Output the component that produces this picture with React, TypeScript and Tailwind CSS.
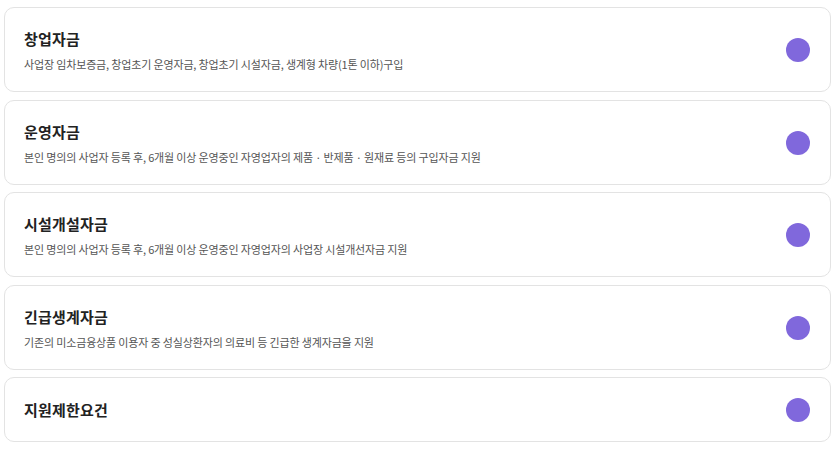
const items = [
  {
    title: '창업자금',
    desc: '사업장 임차보증금, 창업초기 운영자금, 창업초기 시설자금, 생계형 차량(1톤 이하)구입',
  },
  {
    title: '운영자금',
    desc: '본인 명의의 사업자 등록 후, 6개월 이상 운영중인 자영업자의 제품 · 반제품 · 원재료 등의 구입자금 지원',
  },
  {
    title: '시설개설자금',
    desc: '본인 명의의 사업자 등록 후, 6개월 이상 운영중인 자영업자의 사업장 시설개선자금 지원',
  },
  {
    title: '긴급생계자금',
    desc: '기존의 미소금융상품 이용자 중 성실상환자의 의료비 등 긴급한 생계자금을 지원',
  },
  { title: '지원제한요건', desc: '' },
]

export default function App() {
  return (
    <div
      className="flex min-h-[449px] flex-col gap-[7.5px] bg-white pb-2 pl-[4px] pr-[7px] pt-[7px]"
      style={{ fontFamily: '"Noto Sans CJK KR", "Noto Sans", sans-serif' }}
    >
      {items.map((item) => (
        <div
          key={item.title}
          className="flex items-center justify-between rounded-[10px] border border-[#e3e3e3] bg-white pb-[19px] pl-[19px] pr-[20px] pt-[20px]"
        >
          <div className="min-w-0">
            <div className="text-[15px] font-bold leading-[22px] tracking-[0.2px] text-[#222]">{item.title}</div>
            {item.desc && (
              <div className="mt-[6px] text-[11px] leading-[16px] tracking-[-0.15px] text-[#555]">{item.desc}</div>
            )}
          </div>
          <div className="h-6 w-6 shrink-0 rounded-full bg-[#8068dc]" />
        </div>
      ))}
    </div>
  )
}
